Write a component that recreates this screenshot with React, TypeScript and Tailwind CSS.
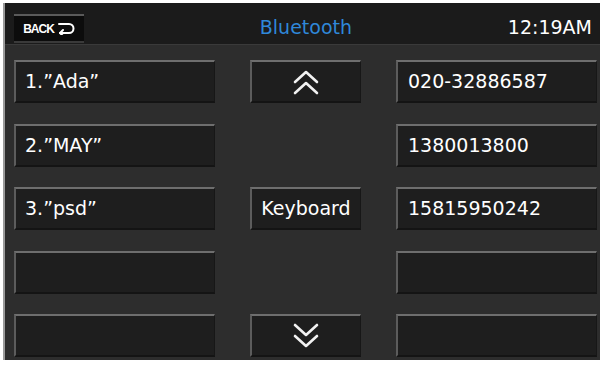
import React from "react";

const btn =
  "h-[43px] bg-[#1e1e1e] border-t-2 border-l-2 border-r border-b-2 border-t-[#6e6e6e] border-l-[#5c5c5c] border-r-[#171717] border-b-[#141414] flex items-center text-white text-[19px] leading-none";

function Chevrons({ down }: { down?: boolean }) {
  return (
    <svg width="30" height="28" viewBox="0 0 30 28" fill="none" stroke="#f2f2f2" strokeWidth="2.6" strokeLinecap="round" strokeLinejoin="round" style={down ? { transform: "rotate(180deg)" } : undefined}>
      <path d="M4 14 L15 4 L26 14" />
      <path d="M4 25 L15 15 L26 25" />
    </svg>
  );
}

export default function App() {
  const left = ["1.\u201DAda\u201D", "2.\u201DMAY\u201D", "3.\u201Dpsd\u201D", "", ""];
  const right = ["020-32886587", "1380013800", "15815950242", "", ""];
  return (
    <div className="w-[603px] h-[365px] bg-white pt-[3px] pl-[3px]" style={{ fontFamily: '"DejaVu Sans", sans-serif' }}>
      <div className="w-[597px] h-[357px] bg-[#2d2d2d] border-l-2 border-l-[#9a9a9a] flex flex-col">
        <div className="h-[42px] bg-[#1b1b1b] border-b border-b-[#3a3a3a] flex items-center pt-[10px] pl-[9px] pr-[8px]">
          <div className="w-[70px] h-[29px] bg-[#0c0c0c] border-t-2 border-t-[#5a5a5a] border-b-2 border-b-[#3a3a3a] flex items-center justify-center gap-[3px]">
            <span className="text-white text-[12px] font-bold tracking-[-1px]" style={{ fontFamily: '"Liberation Sans", sans-serif' }}>BACK</span>
            <svg width="18" height="13" viewBox="0 0 18 13" fill="none" stroke="#ffffff" strokeWidth="2" strokeLinecap="round" strokeLinejoin="round">
              <path d="M2 2 H12 A4.5 4.5 0 0 1 12 11 H3" />
              <path d="M6 8 L3 11 L6 14" />
            </svg>
          </div>
          <div className="flex-1 text-center text-[#2f88d9] text-[19px] pl-[20px] -mt-[2px]">Bluetooth</div>
          <div className="text-white text-[19px] -mt-[2px]">12:19AM</div>
        </div>
        <div className="flex-1 pl-[9px] pt-[15px] grid grid-cols-[201px_111px_201px] gap-x-[35px] grid-rows-[43px_43px_43px_43px_43px] gap-y-[20.5px]">
          {left.map((t, i) => (
            <React.Fragment key={i}>
              <div className={btn + " pl-[9px]"}>{t}</div>
              {i === 0 ? (
                <div className={btn + " justify-center"}><Chevrons /></div>
              ) : i === 2 ? (
                <div className={btn + " justify-center"}>Keyboard</div>
              ) : i === 4 ? (
                <div className={btn + " justify-center"}><Chevrons down /></div>
              ) : (
                <div />
              )}
              <div className={btn + " pl-[10px]"}>{right[i]}</div>
            </React.Fragment>
          ))}
        </div>
      </div>
    </div>
  );
}
